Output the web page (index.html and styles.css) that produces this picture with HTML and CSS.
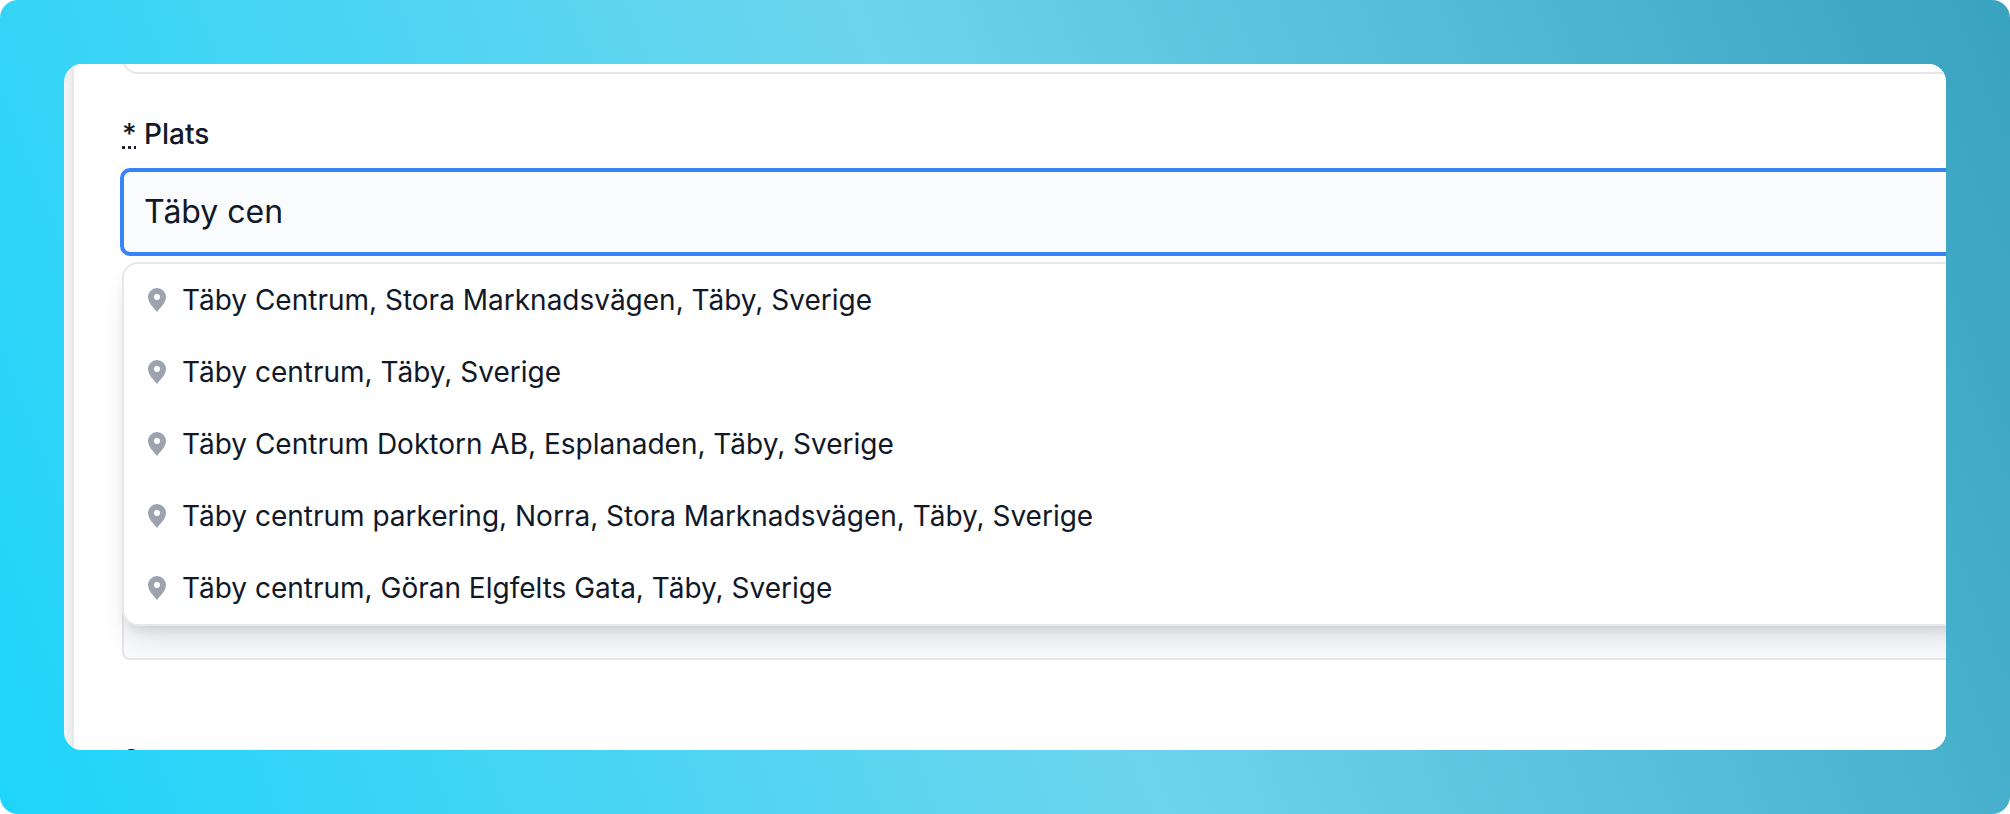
FILE: index.html
```html
<!DOCTYPE html>
<html lang="sv">
<head>
    <meta charset="utf-8"/>
    <title>Plats</title>
    <link rel="stylesheet" href="styles.css">
</head>
<body>
    <main class="window">
        <form class="panel">
            <input class="field previous" type="text" aria-label="Titel"/>

            <label class="label" for="place"><abbr title="obligatorisk">*</abbr> Plats</label>

            <div class="autocomplete">
                <input class="field place" id="place" type="text" value="Täby cen" autocomplete="off"/>
                <ul class="suggestions">
                    <li>
                        <svg class="pin" viewBox="0 0 18 24"><path d="M9 0a9 9 0 0 0-9 9c0 5.500 5.500 10.500 9 15 3.500-4.500 9-9.500 9-15a9 9 0 0 0-9-9zm0 12a3 3 0 1 1 0-6 3 3 0 0 1 0 6z"/></svg>
                        Täby Centrum, Stora Marknadsvägen, Täby, Sverige
                    </li>
                    <li>
                        <svg class="pin" viewBox="0 0 18 24"><path d="M9 0a9 9 0 0 0-9 9c0 5.500 5.500 10.500 9 15 3.500-4.500 9-9.500 9-15a9 9 0 0 0-9-9zm0 12a3 3 0 1 1 0-6 3 3 0 0 1 0 6z"/></svg>
                        Täby centrum, Täby, Sverige
                    </li>
                    <li>
                        <svg class="pin" viewBox="0 0 18 24"><path d="M9 0a9 9 0 0 0-9 9c0 5.500 5.500 10.500 9 15 3.500-4.500 9-9.500 9-15a9 9 0 0 0-9-9zm0 12a3 3 0 1 1 0-6 3 3 0 0 1 0 6z"/></svg>
                        Täby Centrum Doktorn AB, Esplanaden, Täby, Sverige
                    </li>
                    <li>
                        <svg class="pin" viewBox="0 0 18 24"><path d="M9 0a9 9 0 0 0-9 9c0 5.500 5.500 10.500 9 15 3.500-4.500 9-9.500 9-15a9 9 0 0 0-9-9zm0 12a3 3 0 1 1 0-6 3 3 0 0 1 0 6z"/></svg>
                        Täby centrum parkering, Norra, Stora Marknadsvägen, Täby, Sverige
                    </li>
                    <li>
                        <svg class="pin" viewBox="0 0 18 24"><path d="M9 0a9 9 0 0 0-9 9c0 5.500 5.500 10.500 9 15 3.500-4.500 9-9.500 9-15a9 9 0 0 0-9-9zm0 12a3 3 0 1 1 0-6 3 3 0 0 1 0 6z"/></svg>
                        Täby centrum, Göran Elgfelts Gata, Täby, Sverige
                    </li>
                </ul>
            </div>

            <input class="field address" type="text" aria-label="Adress"/>

            <label class="label next" for="sponsor">Sponsor</label>
            <input class="field" id="sponsor" type="text"/>
        </form>
    </main>
</body>
</html>
```

FILE: styles.css
```css
*{
    margin: 0;
    padding: 0;
    box-sizing: border-box;
}
html{
    background: white;
    overflow: hidden;
}
body{
    display: flex;
    height: 100vh;
    padding: 64px;
    border-radius: 18px;
    background: linear-gradient(69deg, #1fd4fb, #6dd5ed 50%, #38a2bf);
    color: #111827;
    font-family: Inter, "Liberation Sans", sans-serif;
    font-size: 28px;
    line-height: 40px;
    overflow: hidden;
}
.window{
    flex: 1;
    min-width: 0;
    padding-left: 8px;
    border-radius: 18px;
    background: linear-gradient(to right, #f3f4f6, #ececef 8px);
    overflow: hidden;
}
.panel{
    display: flex;
    flex-direction: column;
    height: 100%;
    /* the form runs past the right edge of the window */
    margin-right: -32px;
    padding-left: 48px;
    border-left: 2px solid #e5e7eb;
    background: white;
}
.field{
    flex-shrink: 0;
    width: 100%;
    height: 84px;
    padding: 0 20px 2px;
    border: 2px solid #e5e7eb;
    border-radius: 8px;
    background: #fafbfd;
    color: inherit;
    font-family: inherit;
    font-size: 32px;
}
.previous{
    margin-top: -74px;
    border-radius: 16px;
    background: white;
}
.label{
    margin: 40px 0 16px;
    font-weight: 500;
}
.label abbr{
    text-decoration: underline dotted;
}
.autocomplete{
    position: relative;
}
.place{
    display: block;
    outline: 4px solid #3883fa;
    outline-offset: -2px;
}
.suggestions{
    position: absolute;
    top: 92px;
    left: 0;
    right: 0;
    border: 2px solid #e5e7eb;
    border-radius: 16px;
    background: white;
    box-shadow: 0 20px 30px -6px rgba(0, 0, 0, .1), 0 8px 12px -4px rgba(0, 0, 0, .1);
    list-style: none;
}
.suggestions li{
    display: flex;
    align-items: center;
    gap: 16px;
    height: 72px;
    padding: 0 24px;
    white-space: nowrap;
}
.pin{
    width: 18px;
    height: 24px;
    fill: #9ca3af;
}
.address{
    margin-top: 322px;
}
.next{
    margin-top: 80px;
}
```
